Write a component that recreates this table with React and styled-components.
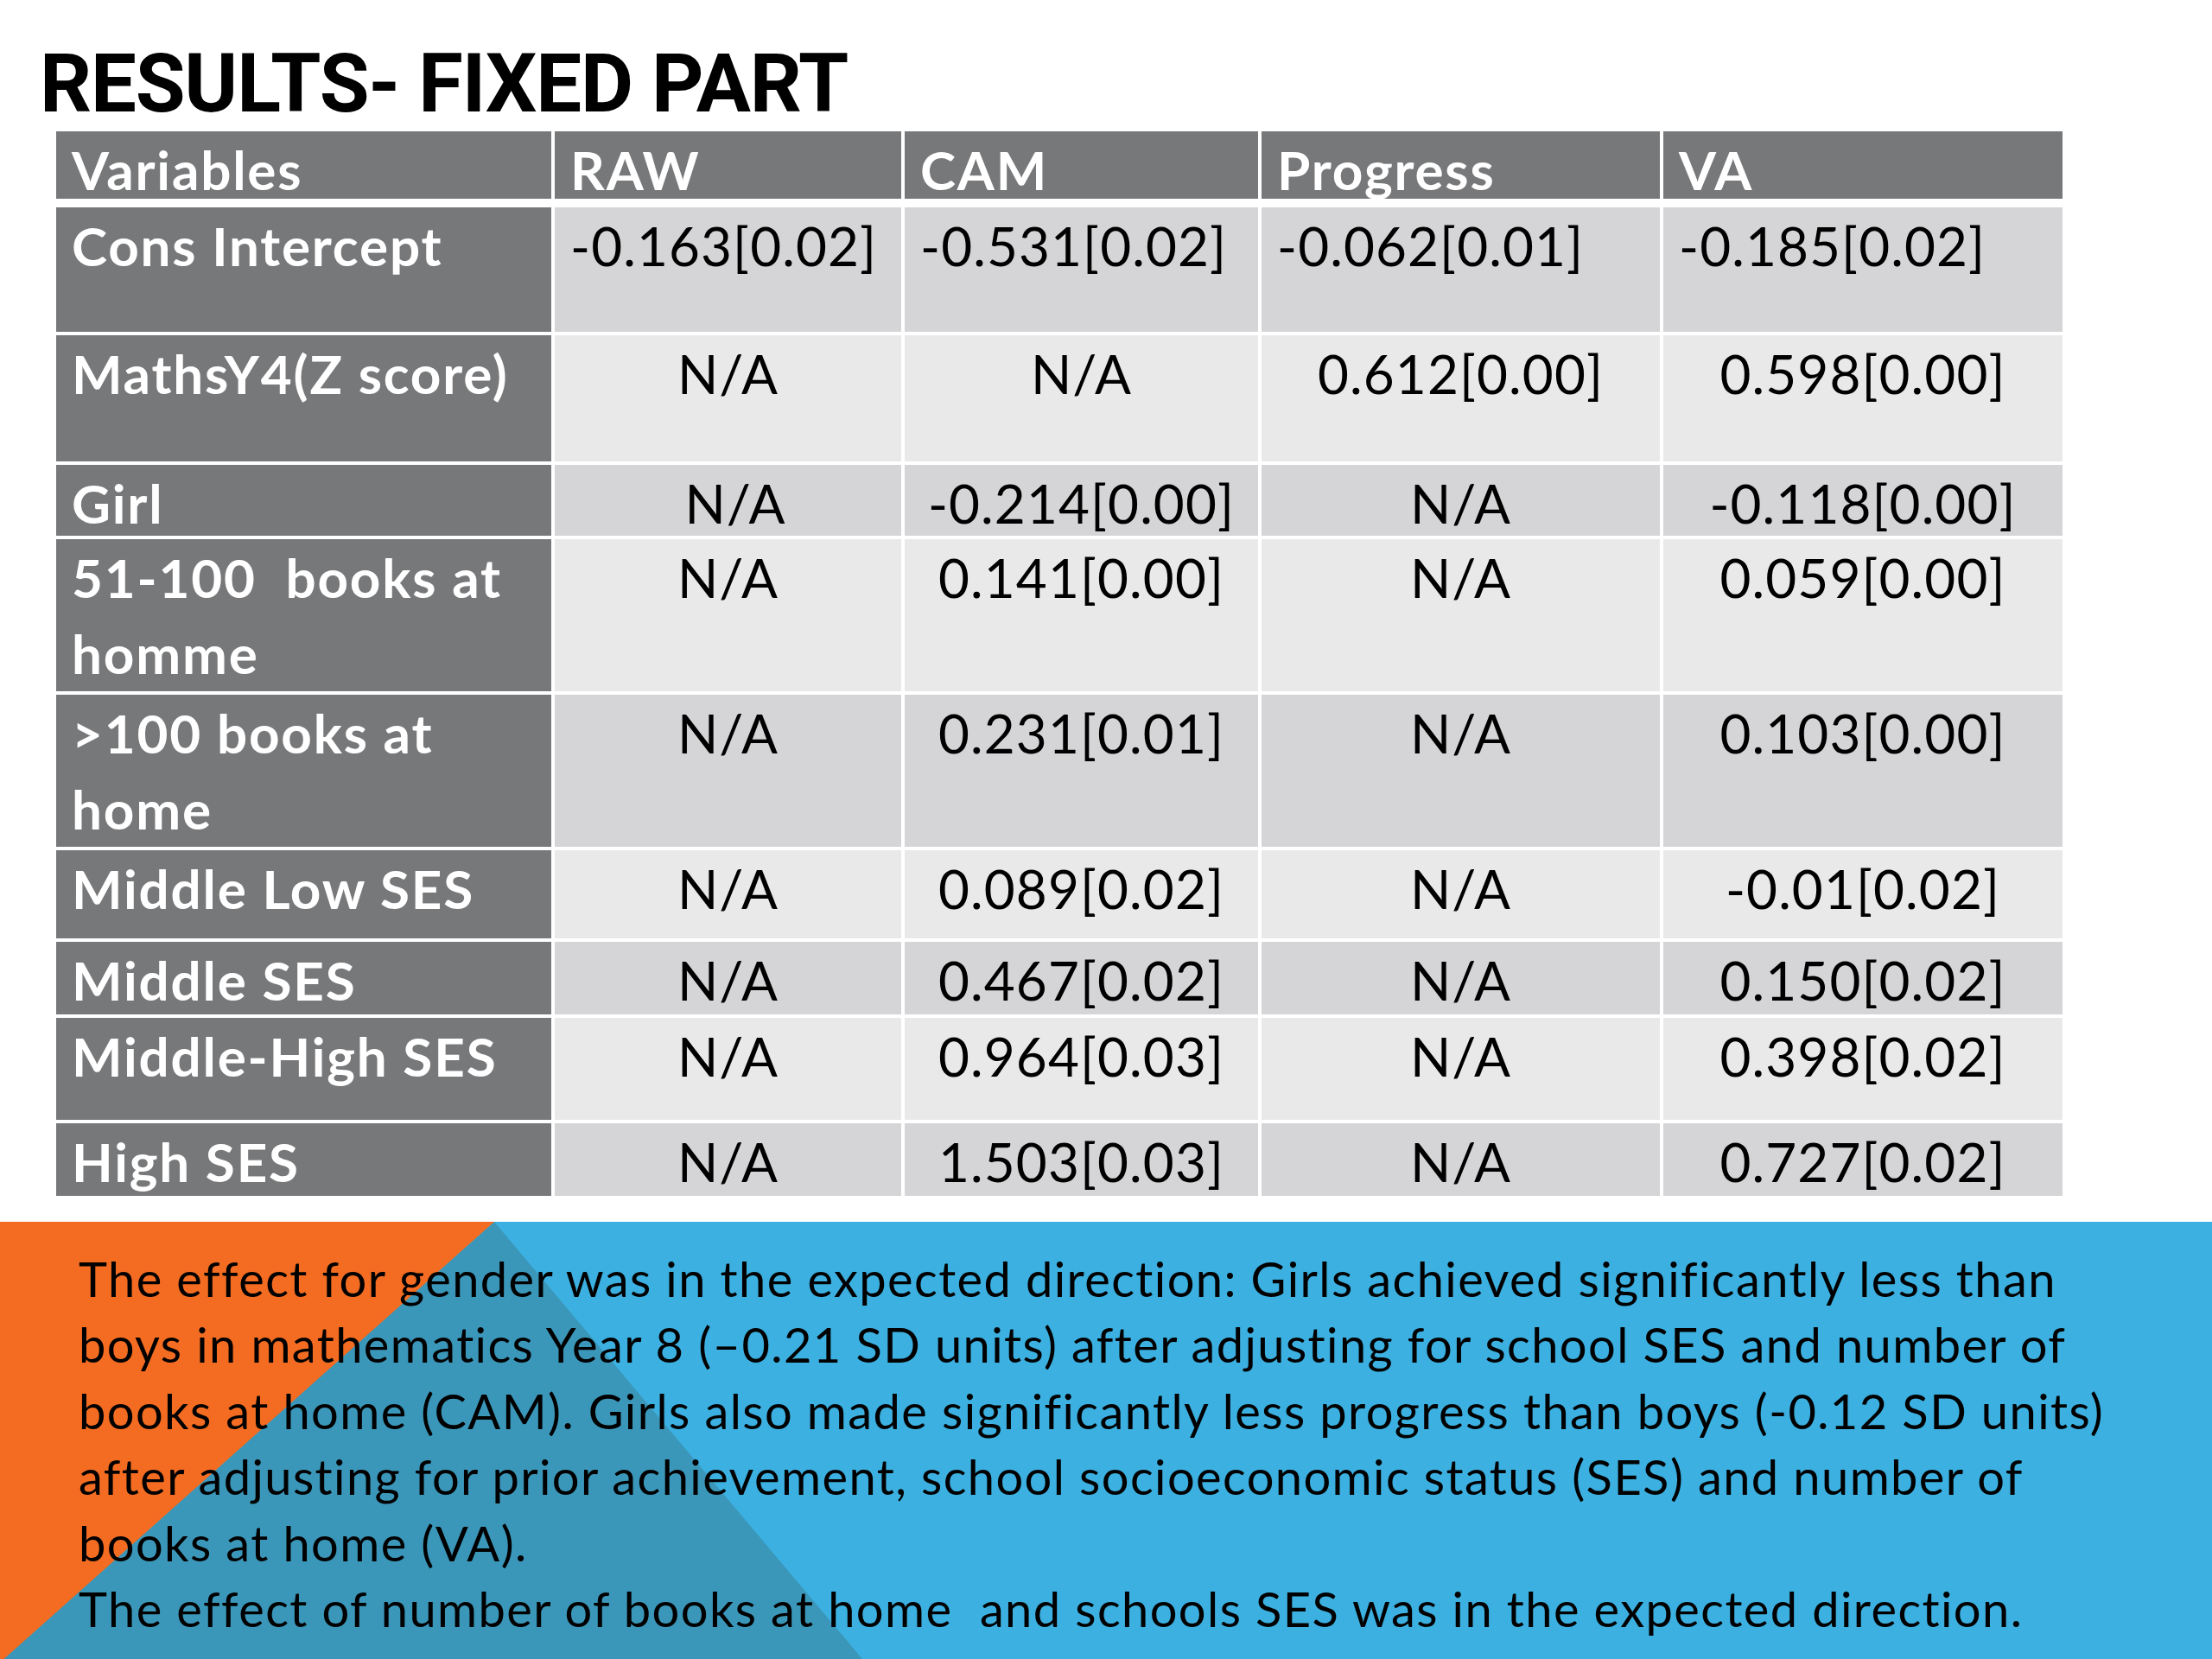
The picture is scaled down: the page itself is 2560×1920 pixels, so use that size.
import React from "react";
import styled, { createGlobalStyle } from "styled-components";

const GlobalStyle = createGlobalStyle`
  html, body {
    margin: 0;
    padding: 0;
    background: #ffffff;
  }
`;

const COLS = "573px 401px 409px 461px 462px";

const header = ["Variables", "RAW", "CAM", "Progress", "VA"];

const rows = [
  { label: "Cons Intercept", h: 144, align: "left", values: ["-0.163[0.02]", "-0.531[0.02]", "-0.062[0.01]", "-0.185[0.02]"] },
  { label: "MathsY4(Z score)", h: 146, values: ["N/A", "N/A", "0.612[0.00]", "0.598[0.00]"] },
  { label: "Girl", h: 82, values: [" N/A", "-0.214[0.00]", "N/A", "-0.118[0.00]"] },
  { label: "51-100  books at\nhomme", h: 176, values: ["N/A", "0.141[0.00]", "N/A", "0.059[0.00]"] },
  { label: ">100 books at\nhome", h: 176, values: ["N/A", "0.231[0.01]", "N/A", "0.103[0.00]"] },
  { label: "Middle Low SES", h: 102, values: ["N/A", "0.089[0.02]", "N/A", "-0.01[0.02]"] },
  { label: "Middle SES", h: 84, values: ["N/A", "0.467[0.02]", "N/A", "0.150[0.02]"] },
  { label: "Middle-High SES", h: 118, values: ["N/A", "0.964[0.03]", "N/A", "0.398[0.02]"] },
  { label: "High SES", h: 84, values: ["N/A", "1.503[0.03]", "N/A", "0.727[0.02]"] },
];

const notes = [
  "The effect for gender was in the expected direction: Girls achieved significantly less than",
  "boys in mathematics Year 8 (\u20130.21 SD units) after adjusting for school SES and number of",
  "books at home (CAM). Girls also made significantly less progress than boys (-0.12 SD units)",
  "after adjusting for prior achievement, school socioeconomic status (SES) and number of",
  "books at home (VA).",
  "The effect of number of books at home  and schools SES was in the expected direction.",
];

const Slide = styled.div`
  width: 2560px;
  height: 1920px;
  overflow: hidden;
  display: flex;
  flex-direction: column;
  background: #ffffff;
`;

const Title = styled.h1`
  margin: 0;
  padding: 50px 0 0 46px;
  height: 94px;
  font-family: Roboto, "Liberation Sans", sans-serif;
  font-weight: 700;
  font-size: 94px;
  line-height: 94px;
  letter-spacing: -1.2px;
  color: #000000;
  white-space: nowrap;
`;

const Table = styled.div`
  margin: 8px 0 0 65px;
  display: flex;
  flex-direction: column;
  gap: 4px;
`;

const Row = styled.div`
  display: grid;
  grid-template-columns: ${COLS};
  grid-template-rows: ${(p) => p.$h}px;
  column-gap: 4px;
  height: ${(p) => p.$h}px;
  margin-bottom: ${(p) => (p.$head ? 6 : 0)}px;
`;

const Cell = styled.div`
  box-sizing: border-box;
  min-height: 0;
  padding: 0 18px;
  font-family: Lato, "Open Sans", sans-serif;
  font-size: 62px;
  line-height: 88px;
  white-space: pre;
  background: ${(p) => p.$bg};
  color: ${(p) => (p.$dark ? "#ffffff" : "#000000")};
  font-weight: ${(p) => (p.$dark ? 700 : 400)};
  letter-spacing: ${(p) => (p.$dark ? 1.8 : 1.1)}px;
  text-align: ${(p) => p.$align || "left"};
`;

const Band = styled.section`
  position: relative;
  margin-top: 30px;
  flex: 1;
  background: #3cb0e0;
  padding: 28px 0 0 91px;
`;

const BandArt = styled.svg`
  position: absolute;
  inset: 0;
  width: 100%;
  height: 100%;
`;

const Notes = styled.p`
  position: relative;
  margin: 0;
  font-family: Lato, "Open Sans", sans-serif;
  font-size: 56px;
  line-height: 76.4px;
  letter-spacing: 1.4px;
  color: #000000;
  white-space: pre;
`;

const GRAY = "#77787a";
const SHADE = ["#d5d5d7", "#e9e9ea"];

export default function App() {
  return (
    <Slide>
      <GlobalStyle />
      <Title>RESULTS- FIXED PART</Title>
      <Table>
        <Row $h={78} $head>
          {header.map((t) => (
            <Cell key={t} $bg={GRAY} $dark>
              {t}
            </Cell>
          ))}
        </Row>
        {rows.map((r, i) => (
          <Row key={r.label} $h={r.h}>
            <Cell $bg={GRAY} $dark>
              {r.label}
            </Cell>
            {r.values.map((v, j) => (
              <Cell key={j} $bg={SHADE[i % 2]} $align={r.align || "center"}>
                {v}
              </Cell>
            ))}
          </Row>
        ))}
      </Table>
      <Band>
        <BandArt viewBox="0 0 2560 506" preserveAspectRatio="none">
          <polygon points="572,0 998,506 0,506" fill="#3b97b9" />
          <polygon points="0,0 572,0 0,510" fill="#f36c21" />
        </BandArt>
        <Notes>{notes.join("\n")}</Notes>
      </Band>
    </Slide>
  );
}
